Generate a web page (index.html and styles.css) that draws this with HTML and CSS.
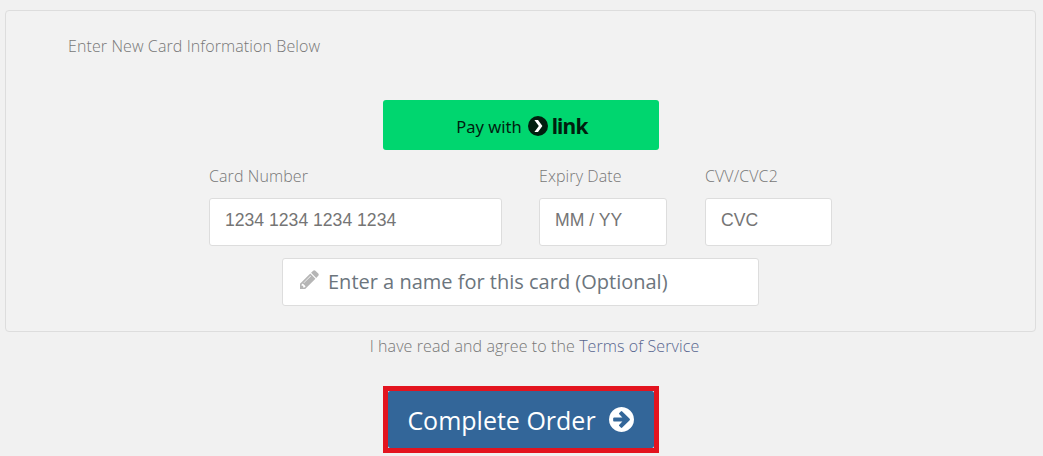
FILE: index.html
```html
<!DOCTYPE html>
<html lang="en">

<head>
    <meta charset="UTF-8" />
    <title>Complete Order</title>
    <link rel="stylesheet" href="styles.css">
</head>

<body>
    <div class="panel">
        <p class="panel-title">Enter New Card Information Below</p>

        <button type="button" class="link-btn">
            <span class="link-pay">Pay with</span>
            <svg class="link-mark" viewBox="0 0 20 20">
                <circle cx="10" cy="10" r="10" fill="#011e0f" />
                <path d="M6.4 3.9h3.6l4.4 6.1-4.4 6.1H6.4l4.4-6.1z" fill="#fff" />
            </svg>
            <span class="link-word">link</span>
        </button>

        <div class="card-row">
            <div class="field field-number">
                <label for="cardNumber">Card Number</label>
                <input type="text" id="cardNumber" placeholder="1234 1234 1234 1234" />
            </div>
            <div class="field field-expiry">
                <label for="cardExpiry">Expiry Date</label>
                <input type="text" id="cardExpiry" placeholder="MM / YY" />
            </div>
            <div class="field field-cvc">
                <label for="cardCvc">CVV/CVC2</label>
                <input type="text" id="cardCvc" placeholder="CVC" />
            </div>
        </div>

        <div class="name-box">
            <svg class="pencil" viewBox="128 128 1536 1536">
                <path fill="#b5b5b5" d="M491 1536l91-91-235-235-91 91v107h128v128h107zm523-928q0-22-22-22-10 0-17 7l-542 542q-7 7-7 17 0 22 22 22 10 0 17-7l542-542q7-7 7-17zm-54-192l416 416-832 832h-416v-416zm683 96q0 53-37 90l-166 166-416-416 166-165q36-38 90-38 53 0 91 38l235 234q37 39 37 91z" />
            </svg>
            <input type="text" placeholder="Enter a name for this card (Optional)" />
        </div>
    </div>

    <p class="terms">I have read and agree to the <a href="#">Terms of Service</a></p>

    <div class="order-wrap">
        <button type="submit" class="order-btn">
            Complete Order
            <svg class="order-arrow" viewBox="0 128 1536 1536">
                <path fill="#fff" d="M1285 896q0-27-18-45l-91-91-362-362q-18-18-45-18t-45 18l-91 91q-18 18-18 45t18 45l189 189h-502q-26 0-45 19t-19 45v128q0 26 19 45t45 19h502l-189 189q-19 19-19 45t19 45l91 91q18 18 45 18t45-18l362-362 91-91q18-18 18-45zm251 0q0 209-103 385.5t-279.5 279.5-385.5 103-385.5-103-279.5-279.5-103-385.5 103-385.5 279.5-279.5 385.5-103 385.5 103 279.5 279.5 103 385.5z" />
            </svg>
        </button>
    </div>
</body>

</html>
```

FILE: styles.css
```css
html,
body {
    height: 456px;
    overflow: hidden;
}

body {
    font-family: 'Open Sans', sans-serif;
    background: #f1f1f1;
    color: #777;
    margin: 0;
    padding: 10px 7px 0 5px;
    box-sizing: border-box;
}

.panel {
    background: #f2f2f2;
    border: 1px solid #ddd;
    border-radius: 4px;
    height: 322px;
    box-sizing: border-box;
    display: flex;
    flex-direction: column;
    align-items: center;
}

.panel-title {
    align-self: flex-start;
    margin: 25px 0 0 62px;
    font-size: 16px;
    line-height: 20px;
    font-weight: 300;
    letter-spacing: 0.1px;
}

.link-btn {
    width: 276px;
    height: 50px;
    margin-top: 44px;
    border: 0;
    border-radius: 3px;
    background: #00d66f;
    display: flex;
    align-items: center;
    justify-content: center;
    padding: 2px 0 0 3px;
    box-sizing: border-box;
    color: #011e0f;
}

.link-pay {
    font-family: 'Noto Sans', sans-serif;
    font-size: 16.5px;
    margin-right: 6px;
}

.link-mark {
    width: 20px;
    height: 20px;
    margin-right: 4px;
}

.link-word {
    font-family: 'Noto Sans', sans-serif;
    font-size: 21px;
    font-weight: 700;
    line-height: 26px;
    letter-spacing: -0.8px;
}

.card-row {
    display: flex;
    gap: 37px;
    margin-top: 15px;
}

.field label {
    display: block;
    font-size: 16px;
    font-weight: 300;
    line-height: 22px;
    letter-spacing: 0.1px;
    margin-bottom: 11px;
}

.field input {
    display: block;
    width: 100%;
    height: 48px;
    box-sizing: border-box;
    background: #fff;
    border: 1px solid #ddd;
    border-radius: 3px;
    padding: 0 15px 3px;
    font-family: 'Liberation Sans', sans-serif;
    font-size: 17.6px;
}

.field input::placeholder {
    color: #757575;
    opacity: 1;
}

.field-number {
    width: 293px;
}

.field-expiry {
    width: 128px;
}

.field-cvc {
    width: 127px;
    margin-left: 1px;
}

.name-box {
    width: 477px;
    height: 48px;
    margin-top: 12px;
    box-sizing: border-box;
    background: #fff;
    border: 1px solid #ddd;
    border-radius: 3px;
    display: flex;
    align-items: center;
    padding-left: 17px;
}

.pencil {
    width: 19px;
    height: 19px;
    margin: 0 9px 5px 0;
    flex-shrink: 0;
}

.name-box input {
    flex: 1;
    min-width: 0;
    border: 0;
    padding: 0 0 2px;
    outline: 0;
    background: transparent;
    font-family: 'Open Sans', sans-serif;
    font-size: 20px;
}

.name-box input::placeholder {
    color: #6c757d;
    opacity: 1;
}

.terms {
    margin: 3px 0 0;
    padding-left: 28px;
    text-align: center;
    font-size: 16px;
    font-weight: 300;
    line-height: 22px;
    letter-spacing: 0.1px;
}

.terms a {
    color: #58668f;
    text-decoration: none;
}

.order-wrap {
    width: 276px;
    height: 67px;
    margin: 29px auto 0;
    box-sizing: border-box;
    border: 5px solid #e3141f;
    background: #fff;
}

.order-btn {
    width: 100%;
    height: 100%;
    border: 0;
    border-radius: 2px;
    background: #336699;
    color: #fff;
    font-family: 'Open Sans', sans-serif;
    font-size: 25px;
    display: flex;
    align-items: center;
    justify-content: center;
    padding: 0;
}

.order-arrow {
    width: 25px;
    height: 25px;
    margin-left: 13px;
}
```
